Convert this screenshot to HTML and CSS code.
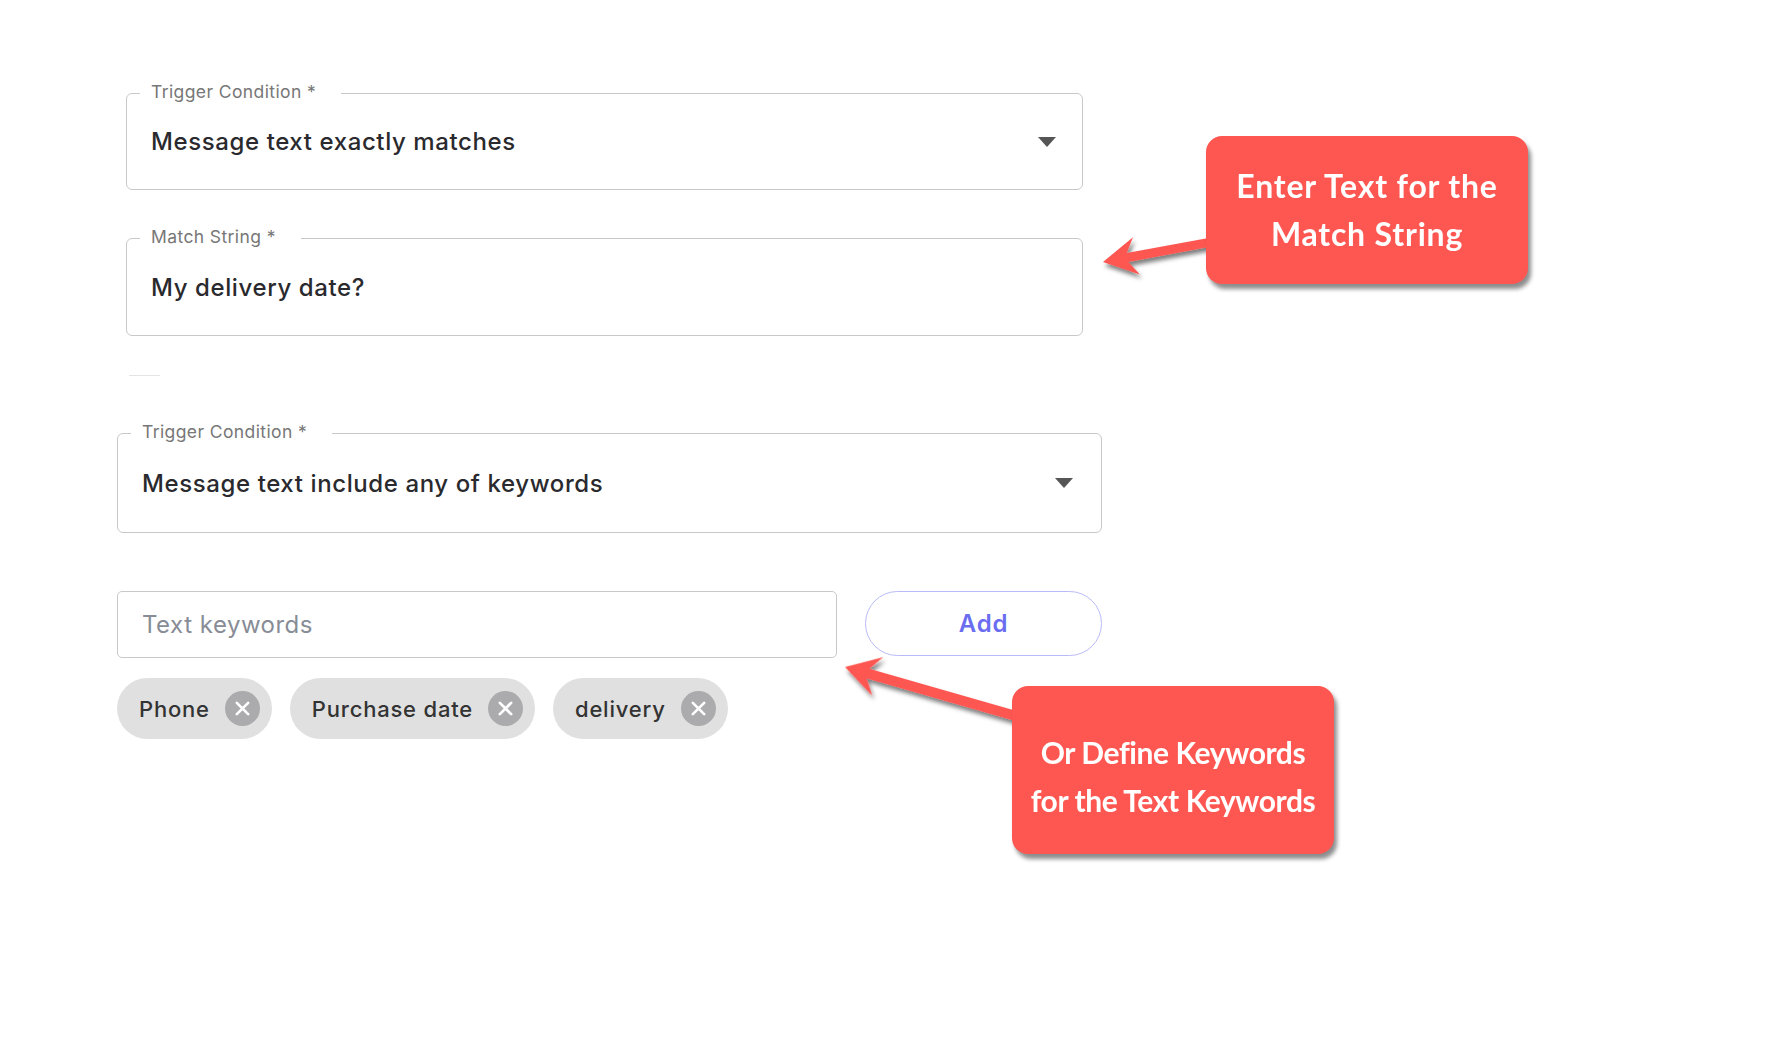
FILE: index.html
```html
<!DOCTYPE html>
<html lang="en">
<head>
    <meta charset="UTF-8">
    <title>Trigger Condition</title>
    <link rel="stylesheet" href="styles.css">
</head>
<body>
    <div class="page">
        <div class="form-block block-top">
            <div class="field field-select">
                <span class="field-label">Trigger Condition *</span>
                <span class="field-value">Message text exactly matches</span>
                <svg class="caret" width="18" height="10" viewBox="0 0 18 10"><path d="M0 0 L18 0 L9 10 Z" fill="#555"/></svg>
            </div>
            <div class="field field-text">
                <span class="field-label">Match String *</span>
                <span class="field-value">My delivery date?</span>
            </div>
            <div class="divider"></div>
        </div>

        <div class="form-block block-bottom">
            <div class="field field-select field-wide">
                <span class="field-label">Trigger Condition *</span>
                <span class="field-value">Message text include any of keywords</span>
                <svg class="caret" width="18" height="10" viewBox="0 0 18 10"><path d="M0 0 L18 0 L9 10 Z" fill="#555"/></svg>
            </div>

            <div class="keyword-row">
                <input class="keyword-input" type="text" placeholder="Text keywords">
                <button class="add-btn">Add</button>
            </div>

            <div class="chips">
                <div class="chip">
                    <span>Phone</span>
                    <svg class="chip-remove" width="35" height="35" viewBox="0 0 34 34"><circle cx="17" cy="17" r="17" fill="#ababad"/><path d="M11.5 11.5 L22.5 22.5 M22.5 11.5 L11.5 22.5" stroke="#fff" stroke-width="2.6" stroke-linecap="round"/></svg>
                </div>
                <div class="chip">
                    <span>Purchase date</span>
                    <svg class="chip-remove" width="35" height="35" viewBox="0 0 34 34"><circle cx="17" cy="17" r="17" fill="#ababad"/><path d="M11.5 11.5 L22.5 22.5 M22.5 11.5 L11.5 22.5" stroke="#fff" stroke-width="2.6" stroke-linecap="round"/></svg>
                </div>
                <div class="chip">
                    <span>delivery</span>
                    <svg class="chip-remove" width="35" height="35" viewBox="0 0 34 34"><circle cx="17" cy="17" r="17" fill="#ababad"/><path d="M11.5 11.5 L22.5 22.5 M22.5 11.5 L11.5 22.5" stroke="#fff" stroke-width="2.6" stroke-linecap="round"/></svg>
                </div>
            </div>
        </div>

        <!-- annotation arrows -->
        <svg class="arrows" width="1770" height="1054" viewBox="0 0 1770 1054">
            <defs>
                <filter id="shadow" x="-20%" y="-20%" width="140%" height="160%">
                    <feDropShadow dx="2" dy="4" stdDeviation="2" flood-color="#000" flood-opacity="0.5"/>
                </filter>
            </defs>
            <g filter="url(#shadow)" fill="#fe5651">
                <g transform="translate(1103 262) rotate(-10.45)">
                    <polygon points="0,0 34,-19 25,-4.5 115,-4.5 115,4.5 25,4.5 34,19"/>
                </g>
                <g transform="translate(845 667) rotate(16)">
                    <polygon points="0,0 34,-20 24,-5 185,-5 185,5 24,5 34,20"/>
                </g>
            </g>
        </svg>

        <div class="callout callout-match">Enter Text for the<br>Match String</div>
        <div class="callout callout-keywords">Or Define Keywords<br>for the Text Keywords</div>
    </div>
</body>
</html>
```

FILE: styles.css
```css
* {
    margin: 0;
    padding: 0;
    box-sizing: border-box;
}

body {
    background: #fff;
    font-family: Inter, 'Noto Sans', sans-serif;
    color: #2a2a2e;
}

.page {
    position: relative;
    width: 1770px;
    height: 1054px;
    padding-top: 93px;
}

.form-block.block-top {
    margin-left: 126px;
    width: 957px;
}

.form-block.block-bottom {
    margin-left: 117px;
    margin-top: 57px;
    width: 985px;
}

.field {
    position: relative;
    display: flex;
    align-items: center;
    justify-content: space-between;
    height: 97px;
    padding: 0 26px 0 24px;
    border: 1.5px solid #c9c9c9;
    border-radius: 6px;
}

.field-text {
    margin-top: 48px;
    height: 98px;
}

.field-wide {
    height: 100px;
    padding: 0 28px 0 24px;
}

.field-label {
    position: absolute;
    top: -12px;
    left: 13px;
    padding: 0 25px 0 11px;
    background: #fff;
    font-size: 17.5px;
    letter-spacing: 0.4px;
    line-height: 20px;
    color: #777;
}

.field-value {
    font-size: 24px;
    font-weight: 500;
    letter-spacing: 0.6px;
    color: #2a2a2e;
}

.divider {
    width: 31px;
    height: 1px;
    margin: 39px 0 0 3px;
    background: #e4e4e4;
}

.keyword-row {
    display: flex;
    align-items: flex-start;
    gap: 28px;
    margin-top: 58px;
}

.keyword-input {
    width: 720px;
    height: 67px;
    padding: 0 24px;
    border: 1.5px solid #c9c9c9;
    border-radius: 5px;
    font-family: inherit;
    font-size: 24px;
    letter-spacing: 0.5px;
    color: #2a2a2e;
    outline: none;
}

.keyword-input::placeholder {
    color: #878c96;
}

.add-btn {
    width: 237px;
    height: 65px;
    border: 1.5px solid #b9bbf8;
    border-radius: 33px;
    background: #fff;
    font-family: inherit;
    font-size: 24px;
    font-weight: 600;
    letter-spacing: 0.8px;
    color: #6b6df0;
}

.chips {
    display: flex;
    gap: 18px;
    margin-top: 20px;
}

.chip {
    display: flex;
    align-items: center;
    gap: 15px;
    height: 61px;
    padding: 0 12px 0 22px;
    border-radius: 31px;
    background: #e0e0e0;
    font-size: 22px;
    font-weight: 500;
    letter-spacing: 0.8px;
    color: #333;
}

.arrows {
    position: absolute;
    top: 0;
    left: 0;
    pointer-events: none;
}

.callout {
    position: absolute;
    width: 322px;
    display: flex;
    align-items: center;
    justify-content: center;
    text-align: center;
    border-radius: 16px;
    background: #fe5651;
    box-shadow: 3px 5px 4px rgba(0, 0, 0, 0.45);
    font-family: Lato, 'Noto Sans', sans-serif;
    font-weight: 700;
    font-size: 31px;
    line-height: 48px;
    color: #fff;
}

.callout-match {
    top: 136px;
    left: 1206px;
    height: 148px;
    font-size: 32px;
    letter-spacing: 0.8px;
}

.callout-keywords {
    top: 686px;
    left: 1012px;
    height: 168px;
    padding-top: 12px;
    font-size: 30px;
    letter-spacing: -0.4px;
}
```
